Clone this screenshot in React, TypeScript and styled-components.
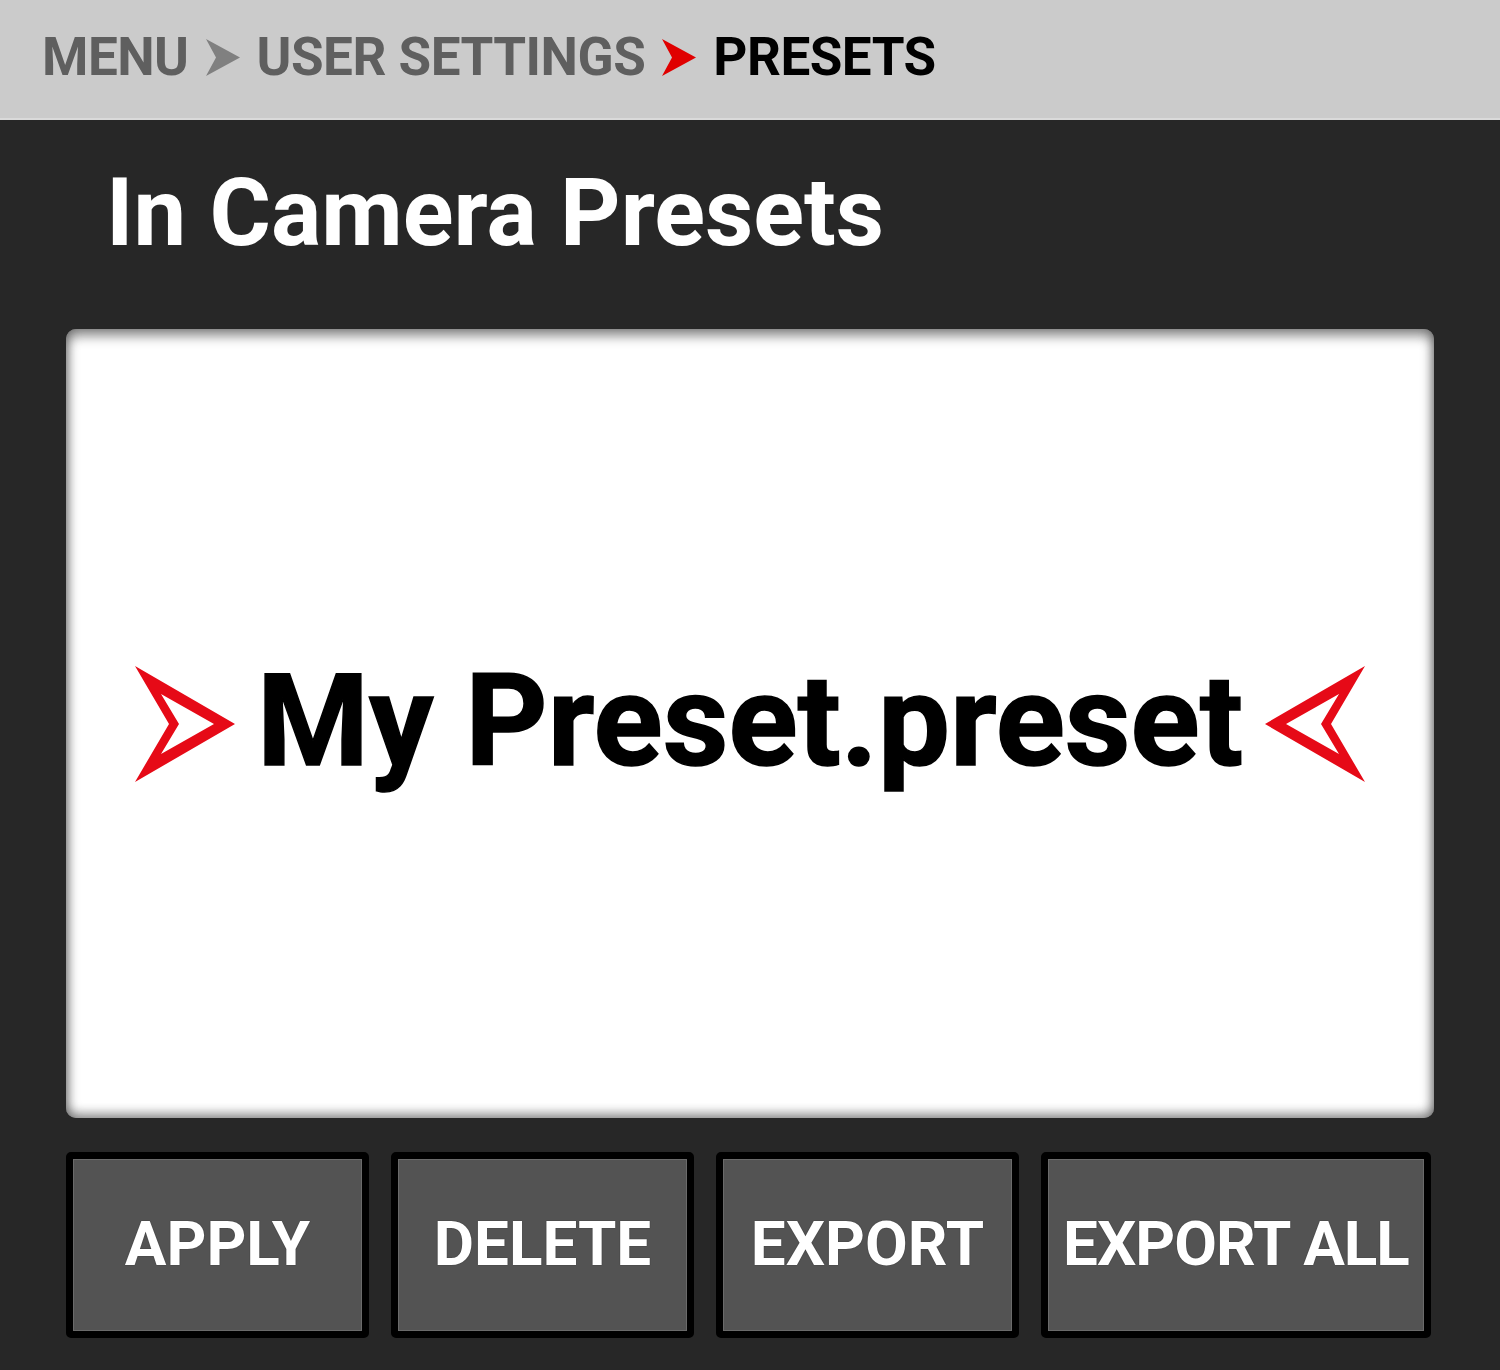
import React from "react";
import styled, { createGlobalStyle } from "styled-components";

const Global = createGlobalStyle`
  html, body { margin: 0; padding: 0; background: #272727; }
  body { font-family: Roboto, "Noto Sans", "Liberation Sans", sans-serif; }
  * { box-sizing: border-box; }
`;

const Page = styled.div`
  width: 1500px;
  height: 1370px;
  background: #272727;
  display: flex;
  flex-direction: column;
  overflow: hidden;
`;

const Header = styled.header`
  height: 120px;
  background: #cbcbcb;
  border-bottom: 2px solid #dadada;
  display: flex;
  align-items: center;
  gap: 17px;
  padding: 0 0 4px 42px;
`;

const Crumb = styled.span<{ $active?: boolean }>`
  font-family: Roboto, sans-serif;
  font-weight: 700;
  font-size: 53px;
  letter-spacing: -0.5px;
  line-height: 1;
  color: ${(p) => (p.$active ? "#000000" : "#5f5f5f")};
`;

const Chevron = styled.svg`
  width: 34px;
  height: 37px;
  flex: none;
`;

const Title = styled.h1`
  margin: 0;
  padding: 46px 0 0 106px;
  height: 209px;
  font-family: Roboto, sans-serif;
  font-weight: 700;
  font-size: 94px;
  line-height: 1;
  color: #ffffff;
`;

const Panel = styled.section`
  margin: 0 66px;
  height: 789px;
  background: #ffffff;
  border-radius: 10px;
  box-shadow: inset 0 0 14px rgba(0, 0, 0, 0.45), inset 0 8px 12px rgba(0, 0, 0, 0.3),
    inset 0 -6px 10px rgba(0, 0, 0, 0.2);
  display: flex;
  align-items: center;
  justify-content: center;
  gap: 22px;
`;

const PresetName = styled.div`
  font-family: Roboto, sans-serif;
  font-weight: 700;
  font-size: 128px;
  line-height: 1;
  color: #000000;
  -webkit-text-stroke: 1.5px #000000;
  padding-bottom: 6px;
`;

const Arrow = styled.svg<{ $flip?: boolean }>`
  width: 100px;
  height: 116px;
  flex: none;
  transform: ${(p) => (p.$flip ? "scaleX(-1)" : "none")};
`;

const ButtonRow = styled.div`
  display: grid;
  grid-template-columns: 303px 303px 303px 390px;
  gap: 22px;
  margin: 34px 0 0 66px;
`;

const Button = styled.button<{ $tight?: boolean }>`
  height: 186px;
  background: #535353;
  border: 7px solid #000000;
  border-radius: 5px;
  box-shadow: inset 0 0 0 1px #6a6a6a;
  color: #ffffff;
  font-family: Roboto, sans-serif;
  font-weight: 700;
  font-size: 62px;
  letter-spacing: ${(p) => (p.$tight ? "-1px" : "0")};
  line-height: 1;
  text-shadow: 0 0 1px rgba(0, 0, 0, 0.8);
  display: flex;
  align-items: center;
  justify-content: center;
  padding: 0 0 2px 0;
  cursor: pointer;
`;

const ChevronIcon = ({ color }: { color: string }) => (
  <Chevron viewBox="0 0 34 37">
    <path d="M0 0 L34 18.5 L0 37 L10 18.5 Z" fill={color} />
  </Chevron>
);

const OutlineArrow = ({ flip }: { flip?: boolean }) => (
  <Arrow viewBox="0 0 100 116" $flip={flip}>
    <path
      fillRule="evenodd"
      fill="#e60a17"
      d="M0 0 L100 58 L0 116 L34 58 Z M26 28 L79 58 L26 88 L44 58 Z"
    />
  </Arrow>
);

export default function App() {
  return (
    <Page>
      <Global />
      <Header>
        <Crumb>MENU</Crumb>
        <ChevronIcon color="#808080" />
        <Crumb>USER SETTINGS</Crumb>
        <ChevronIcon color="#e00000" />
        <Crumb $active>PRESETS</Crumb>
      </Header>
      <Title>In Camera Presets</Title>
      <Panel>
        <OutlineArrow />
        <PresetName>My Preset.preset</PresetName>
        <OutlineArrow flip />
      </Panel>
      <ButtonRow>
        <Button>APPLY</Button>
        <Button>DELETE</Button>
        <Button>EXPORT</Button>
        <Button $tight>EXPORT ALL</Button>
      </ButtonRow>
    </Page>
  );
}
